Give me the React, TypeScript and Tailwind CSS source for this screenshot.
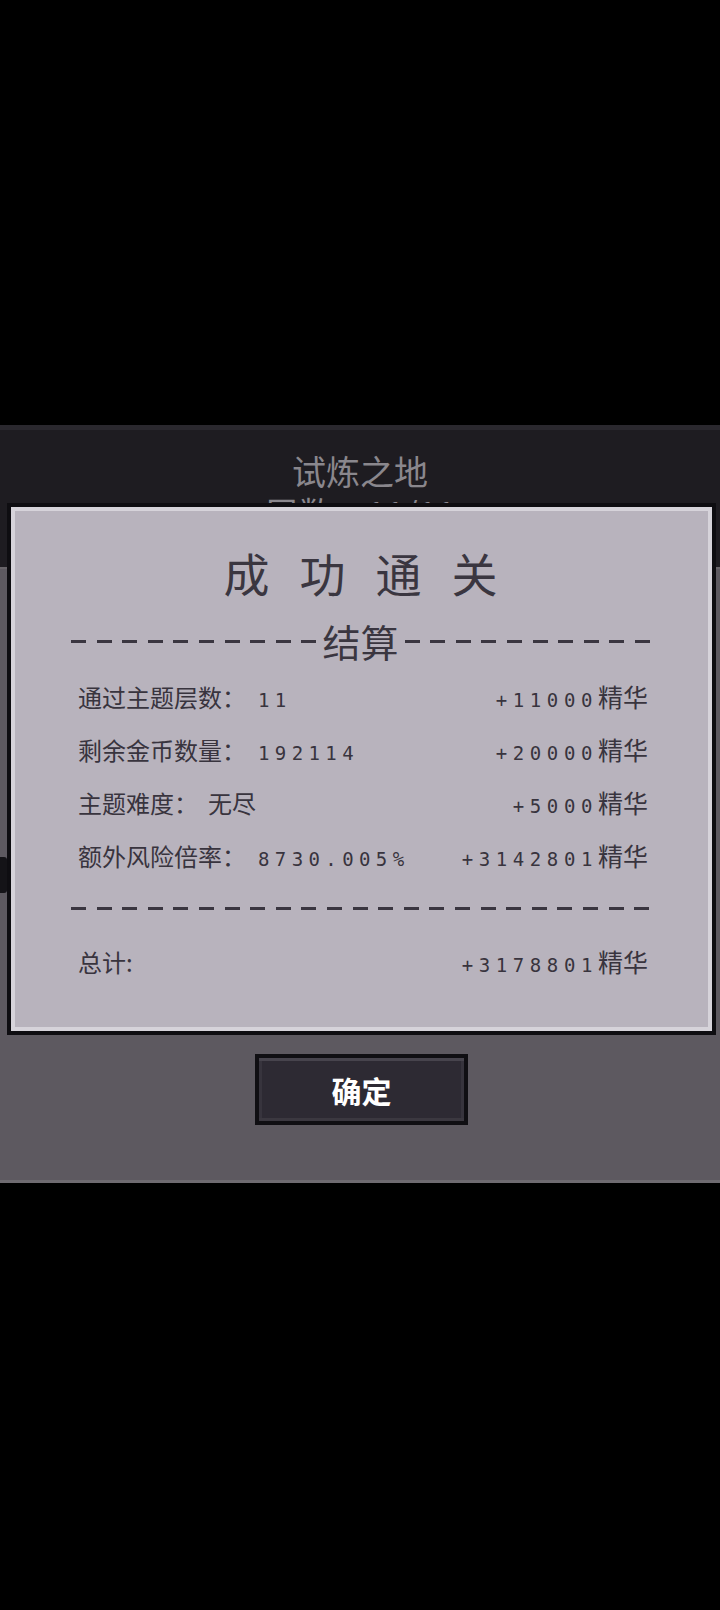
const cjk = "font-['Noto_Sans_CJK_SC','Noto_Sans',sans-serif]";
const mono = "font-['DejaVu_Sans_Mono','Liberation_Mono',monospace]";

type Row = { label: string; value: string; numeric: boolean; gain: string };

const rows: Row[] = [
  { label: "通过主题层数：", value: "11", numeric: true, gain: "+11000" },
  { label: "剩余金币数量：", value: "192114", numeric: true, gain: "+20000" },
  { label: "主题难度：", value: "无尽", numeric: false, gain: "+5000" },
  { label: "额外风险倍率：", value: "8730.005%", numeric: true, gain: "+3142801" },
];

// dashed rule; "reverse" starts the pattern from the right end
const Dashes = ({ className = "", reverse = false }: { className?: string; reverse?: boolean }) => (
  <div
    className={`h-[3px] ${
      reverse
        ? "bg-[image:repeating-linear-gradient(270deg,#3a3640_0_15px,transparent_15px_25.6px)]"
        : "bg-[image:repeating-linear-gradient(90deg,#3a3640_0_15px,transparent_15px_25.6px)]"
    } ${className}`}
  />
);

const Gain = ({ amount }: { amount: string }) => (
  <span className="flex items-baseline">
    <span className={`${mono} text-[19px] tracking-[5.6px]`}>{amount}</span>
    <span className={`${cjk} text-[25px]`}>精华</span>
  </span>
);

const ResultRow = ({ row }: { row: Row }) => (
  <div className="h-[53px] flex items-center justify-between pl-[7px] pr-[2px]">
    <div className="flex items-baseline">
      <span className={`${cjk} text-[24px]`}>{row.label}</span>
      {row.numeric ? (
        <span className={`${mono} text-[19px] tracking-[5.4px] ml-[12px]`}>{row.value}</span>
      ) : (
        <span className={`${cjk} text-[24px] ml-[10px]`}>{row.value}</span>
      )}
    </div>
    <Gain amount={row.gain} />
  </div>
);

const SettlementDialog = () => {
  return (
    <div className="absolute top-[78px] left-[7px] w-[709px] flex flex-col items-center">
      <div className="w-full h-[532px] border-[4px] border-[#0e0d11] bg-[#d6d3da] p-[4px]">
        <div className="w-full h-full bg-[#b8b3bd] text-[#38343e] pl-[56px] pr-[58px] flex flex-col">
          <div
            className={`${cjk} mt-[37px] h-[48px] leading-[48px] text-[46px] tracking-[30px] text-center pl-[30px] text-[#3a3640]`}
          >
            成功通关
          </div>

          <div className="mt-[25px] h-[40px] flex items-center">
            <Dashes className="flex-1" />
            <span className={`${cjk} text-[38px] leading-[40px] px-[1px] text-[#3a3640]`}>结算</span>
            <Dashes className="flex-1" reverse />
          </div>

          <div className="mt-[9px] flex flex-col">
            {rows.map((r) => (
              <ResultRow key={r.label} row={r} />
            ))}
          </div>

          <Dashes className="mt-[25px] w-full" />

          <div className="mt-[37px] h-[30px] flex items-center justify-between pl-[7px] pr-[2px]">
            <span className={`${cjk} text-[24px]`}>总计:</span>
            <Gain amount="+3178801" />
          </div>
        </div>
      </div>

      <button className="mt-[19px] w-[213px] h-[71px] border-[4px] border-[#100f13] bg-[#2d2a33] shadow-[inset_0_3px_0_#47444d,inset_0_-3px_0_#3b3840,inset_3px_0_0_#37343d,inset_-3px_0_0_#37343d] flex items-center justify-center">
        <span className={`${cjk} text-[30px] font-bold text-white leading-none`}>确定</span>
      </button>
    </div>
  );
};

export default function App() {
  return (
    <div className="w-[720px] h-[1610px] bg-black flex flex-col overflow-hidden">
      <div className="h-[425px]" />

      <div className="relative h-[758px] flex flex-col">
        {/* top bar of the stage */}
        <div className="h-[142px] bg-[#1e1c21] border-t-[5px] border-[#2a282e] flex flex-col items-center overflow-hidden">
          <div className={`${cjk} mt-[20px] text-[34px] leading-[42px] text-center text-[#8a878d]`}>
            试炼之地
            <br />
            层数：11/11
          </div>
        </div>

        {/* stage body */}
        <div className="relative flex-1 bg-[#5d5960] border-t-[2px] border-[#686469] border-b-[3px] border-b-[#6f6b71]">
          <div className="absolute left-0 top-[288px] w-[7px] h-[36px] bg-[#141317] rounded-r-[3px]" />
        </div>

        <SettlementDialog />
      </div>
    </div>
  );
}
